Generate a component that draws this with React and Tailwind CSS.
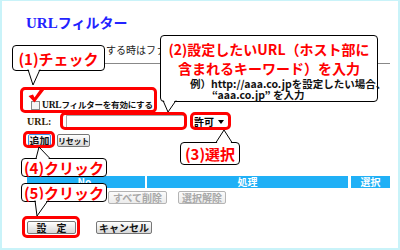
const jp = "font-['Noto_Sans_CJK_JP',sans-serif]";

const Btn = ({ children, className = '', disabled }) => (
  <div
    className={`flex items-center justify-center h-[13px] rounded-[2px] border bg-linear-to-b font-bold leading-none whitespace-nowrap ${jp} ${
      disabled
        ? 'border-[#b4b4b4] from-[#fbfbfb] to-[#ececec] text-[#a8a8a8]'
        : 'border-[#777] from-white to-[#d8d8d8] text-[#111]'
    } ${className}`}
  >
    {children}
  </div>
);

const Callout = ({ className = '', children }) => (
  <div className={`absolute bg-white border border-black rounded-[4px] ${jp} ${className}`}>{children}</div>
);

// tails: [x1, x2, edgeY, tipX, tipY, dir] dir=1 goes down from bottom edge, -1 goes up from top edge
const tails = [
  [28, 40, 70, 33, 85, 1],
  [163, 176, 101, 168, 112, 1],
  [216, 232, 142, 224, 130, -1],
  [36, 50, 158, 39, 147, -1],
  [35, 48, 201, 37, 216, 1],
];

export default function App() {
  return (
    <div className="relative w-[400px] h-[250px] overflow-hidden bg-white shadow-[inset_2px_1px_0_0_#c9f3f9,inset_-2px_-2px_0_0_#c9f3f9]">
      {/* base page */}
      <div className="pl-[26px] flex flex-col">
        <div className={`mt-[11px] h-[21px] leading-[21px] font-bold text-[#2323ff] whitespace-nowrap ${jp}`}>
          <span className="text-[15px] font-['Liberation_Serif',serif]">URL</span>
          <span className="text-[14px]">フィルター</span>
        </div>
        <div className={`mt-[12px] h-[12px] leading-[12px] text-[10px] text-[#222] pl-[80px] whitespace-nowrap ${jp}`}>
          する時はファミリー
        </div>
        <div className="mt-[7px] ml-[1px] w-[363px] border-t border-[#888]" />
        <div className="mt-[35px] h-[12px] flex items-center pl-[5px]">
          <div className="w-[9px] h-[9px] border border-[#888] bg-[#f4f4f4]" />
          <span className={`ml-[2px] text-[8.5px] tracking-[-0.2px] font-bold leading-none text-[#111] whitespace-nowrap ${jp}`}>
            <span className="text-[9.5px] font-['Liberation_Serif',serif]">URL</span>フィルターを有効にする
          </span>
        </div>
        <div className="mt-[4px] h-[13px] flex items-center pl-[1px]">
          <span className="w-[39px] text-[10px] font-bold leading-none text-[#332200] font-['Liberation_Serif',serif]">URL:</span>
          <div className="w-[119px] h-[13px] border border-[#a8a8a8] bg-white" />
          <div className={`ml-[9px] w-[34px] h-[13px] flex items-center justify-between bg-white text-[10px] font-bold leading-none ${jp}`}>
            <span>許可</span>
            <span className="mr-[4px] w-0 h-0 border-l-[3.5px] border-r-[3.5px] border-t-[4px] border-l-transparent border-r-transparent border-t-black" />
          </div>
        </div>
        <div className="mt-[6px] flex pl-[1px]">
          <Btn className="ml-[1px] w-[23px] text-[10px] !border-[#3a8fe6]">追加</Btn>
          <Btn className="ml-[6px] w-[33px] text-[8px] tracking-[-0.3px]">リセット</Btn>
        </div>
        <div className={`mt-[29px] ml-[1px] h-[12px] flex text-[10px] font-bold leading-[12px] text-white ${jp}`}>
          <div className="w-[118px] bg-[#20b0f6] text-center">No.</div>
          <div className="ml-[2px] w-[201px] bg-[#20b0f6] text-center">処理</div>
          <div className="ml-[3px] w-[39px] bg-[#20b0f6] text-center">選択</div>
        </div>
        <div className="mt-[3px] flex pl-[1px]">
          <Btn disabled className="ml-[81px] w-[59px] text-[10px]">すべて削除</Btn>
          <Btn disabled className="ml-[11px] w-[48px] text-[10px]">選択解除</Btn>
        </div>
        <div className="mt-[17px] flex pl-[1px]">
          <Btn className="w-[49px] text-[10px]">設　定</Btn>
          <Btn className="ml-[20px] w-[56px] text-[10px]">キャンセル</Btn>
        </div>
      </div>

      {/* red highlights */}
      <div className="absolute left-[20px] top-[87px] w-[137px] h-[26px] border-[3px] border-[#ff0000] rounded-[5px]" />
      <div className="absolute left-[60px] top-[112px] w-[127px] h-[18px] border-[3px] border-[#ff0000] rounded-[5px]" />
      <div className="absolute left-[190px] top-[112px] w-[41px] h-[18px] border-[3px] border-[#ff0000] rounded-[5px]" />
      <div className="absolute left-[23px] top-[131px] w-[32px] h-[17px] border-[3px] border-[#ff0000] rounded-[5px]" />
      <div className="absolute left-[22px] top-[216px] w-[58px] h-[22px] border-[3px] border-[#ff0000] rounded-[5px]" />

      {/* check mark */}
      <svg className="absolute left-[26px] top-[86px]" width="20" height="18" viewBox="0 0 20 18">
        <path d="M2.5 10 L7 8.5 L8.5 11.5 L15.5 1.5 L18.5 3.5 L8.5 16.5 Z" fill="#ff0000" />
      </svg>

      {/* callouts */}
      <Callout className="left-[12px] top-[45px] w-[93px] h-[26px] flex items-center justify-center">
        <span className="text-[15px] font-bold leading-none text-[#ff0000]">(1)チェック</span>
      </Callout>
      <Callout className="left-[160px] top-[35px] w-[218px] h-[67px] pt-[4px]">
        <div className="text-center text-[14px] font-bold leading-[19px] text-[#ff0000] whitespace-nowrap">(2)設定したいURL（ホスト部に</div>
        <div className="text-center text-[14px] font-bold leading-[19px] text-[#ff0000] whitespace-nowrap">含まれるキーワード）を入力</div>
        <div className="pl-[29px] text-[10.5px] font-bold leading-[11px] text-[#111] whitespace-nowrap">例）http://aaa.co.jpを設定したい場合、</div>
        <div className="pl-[51px] text-[10.5px] font-bold leading-[12px] text-[#111] whitespace-nowrap">“aaa.co.jp” を入力</div>
      </Callout>
      <Callout className="left-[180px] top-[142px] w-[60px] h-[23px] flex items-center justify-center">
        <span className="text-[15px] font-bold leading-none text-[#ff0000]">(3)選択</span>
      </Callout>
      <Callout className="left-[21px] top-[158px] w-[86px] h-[19px] flex items-center justify-center">
        <span className="text-[15px] font-bold leading-none text-[#ff0000]">(4)クリック</span>
      </Callout>
      <Callout className="left-[21px] top-[183px] w-[86px] h-[19px] flex items-center justify-center">
        <span className="text-[15px] font-bold leading-none text-[#ff0000]">(5)クリック</span>
      </Callout>

      {/* callout tails */}
      <svg className="absolute left-0 top-0 pointer-events-none" width="400" height="250">
        {tails.map(([x1, x2, y, tx, ty, d], i) => (
          <g key={i}>
            <polygon points={`${x1 + 0.5},${y - d * 1.5} ${x2 - 0.5},${y - d * 1.5} ${tx},${ty}`} fill="white" />
            <line x1={x1} y1={y - d * 0.5} x2={tx} y2={ty} stroke="black" strokeWidth="1" />
            <line x1={x2} y1={y - d * 0.5} x2={tx} y2={ty} stroke="black" strokeWidth="1" />
          </g>
        ))}
      </svg>
    </div>
  );
}
